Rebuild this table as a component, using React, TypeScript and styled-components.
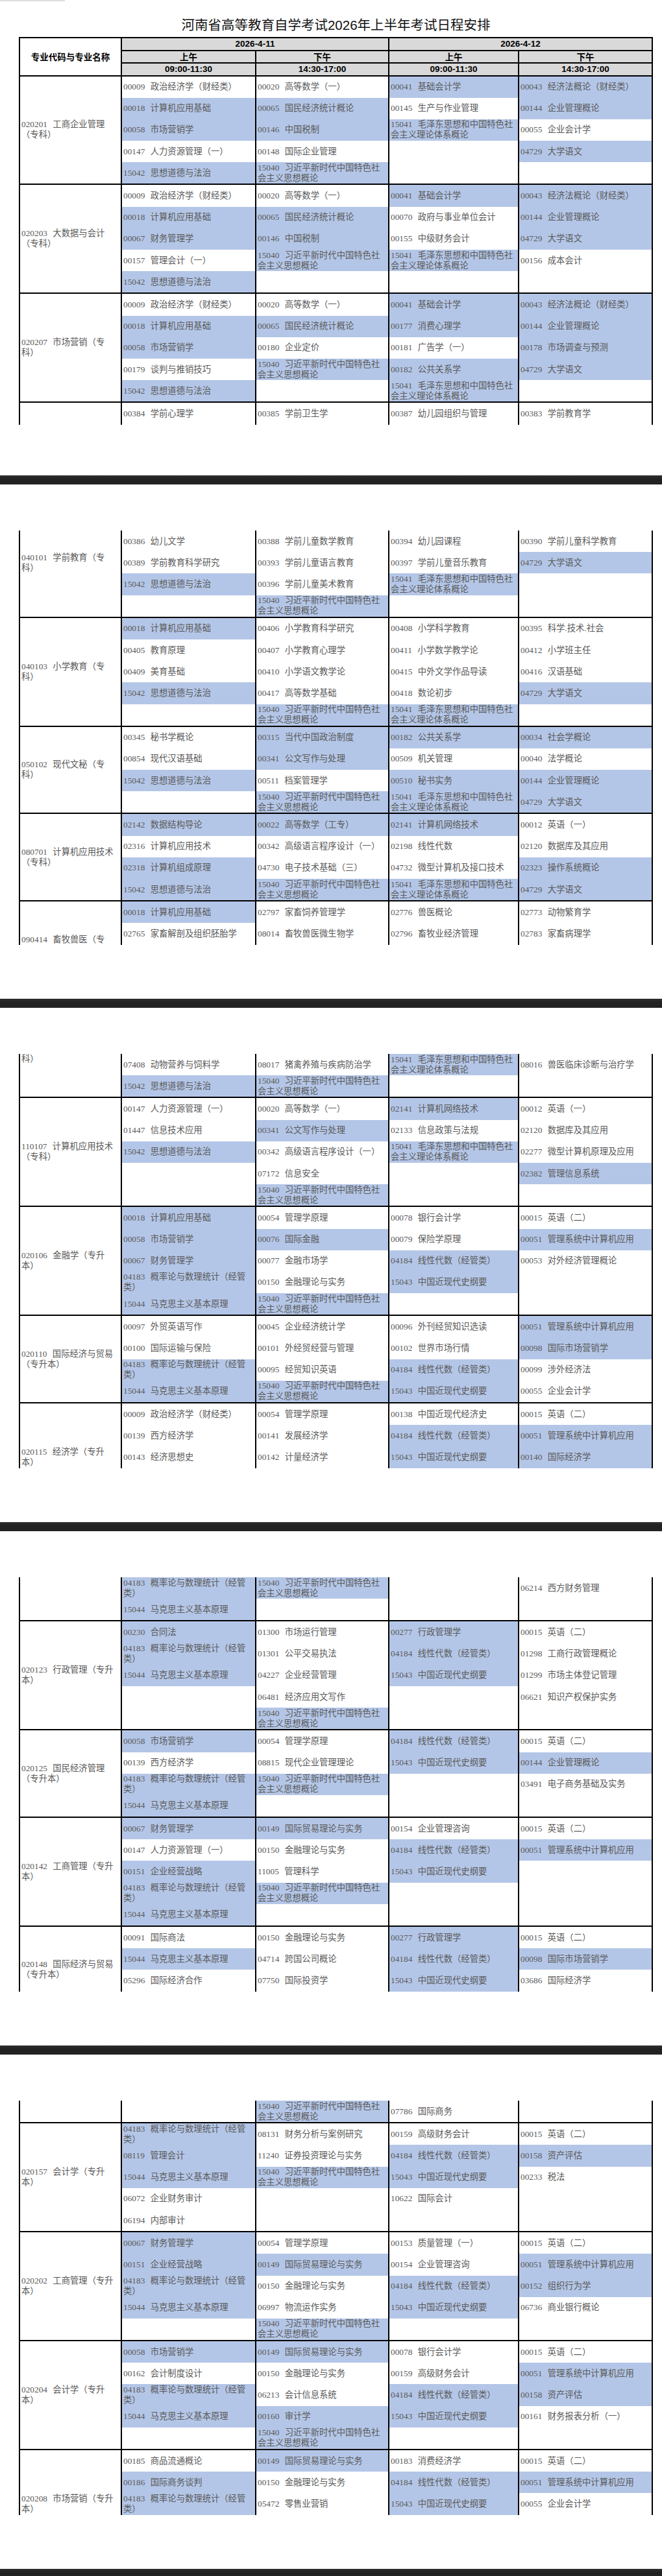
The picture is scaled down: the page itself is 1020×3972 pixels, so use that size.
import React from 'react'
import styled, { createGlobalStyle } from 'styled-components'

type Group = { label: string; rows: string[][]; span?: number }
type Segment = { group: Group; start: number; count: number }

const ROW = 33.2
const COLS = '155px 205px 203px 198px 204px'
const PAGE_ROWS = [16, 19, 19, 19, 19]

// shared courses, '*' marks a blue cell
const X = '*15040 习近平新时代中国特色社会主义思想概论'
const M = '*15041 毛泽东思想和中国特色社会主义理论体系概论'
const S = '*15042 思想道德与法治'
const J = '*15043 中国近现代史纲要'
const K = '*15044 马克思主义基本原理'
const Y = '*04729 大学语文'
const P = '*04183 概率论与数理统计（经管类）'
const L = '*04184 线性代数（经管类）'
const E2 = '00015 英语（二）'
const MS = '*00051 管理系统中计算机应用'
const ZZ = '00009 政治经济学（财经类）'

const groups: Group[] = [
  {
    label: '020201 工商企业管理（专科）',
    rows: [
      [ZZ, '00020 高等数学（一）', '*00041 基础会计学', '*00043 经济法概论（财经类）'],
      ['*00018 计算机应用基础', '*00065 国民经济统计概论', '00145 生产与作业管理', '*00144 企业管理概论'],
      ['*00058 市场营销学', '*00146 中国税制', M, '00055 企业会计学'],
      ['00147 人力资源管理（一）', '00148 国际企业管理', '', Y],
      [S, X, '', ''],
    ],
  },
  {
    label: '020203 大数据与会计（专科）',
    rows: [
      [ZZ, '00020 高等数学（一）', '*00041 基础会计学', '*00043 经济法概论（财经类）'],
      ['*00018 计算机应用基础', '*00065 国民经济统计概论', '00070 政府与事业单位会计', '*00144 企业管理概论'],
      ['*00067 财务管理学', '*00146 中国税制', '00155 中级财务会计', Y],
      ['00157 管理会计（一）', X, M, '00156 成本会计'],
      [S, '', '', ''],
    ],
  },
  {
    label: '020207 市场营销（专科）',
    rows: [
      [ZZ, '00020 高等数学（一）', '*00041 基础会计学', '*00043 经济法概论（财经类）'],
      ['*00018 计算机应用基础', '*00065 国民经济统计概论', '*00177 消费心理学', '*00144 企业管理概论'],
      ['*00058 市场营销学', '00180 企业定价', '00181 广告学（一）', '*00178 市场调查与预测'],
      ['00179 谈判与推销技巧', X, '*00182 公共关系学', Y],
      [S, '', M, ''],
    ],
  },
  {
    label: '040101 学前教育（专科）',
    rows: [
      ['00384 学前心理学', '00385 学前卫生学', '00387 幼儿园组织与管理', '00383 学前教育学'],
      ['00386 幼儿文学', '00388 学前儿童数学教育', '00394 幼儿园课程', '00390 学前儿童科学教育'],
      ['00389 学前教育科学研究', '00393 学前儿童语言教育', '00397 学前儿童音乐教育', Y],
      [S, '00396 学前儿童美术教育', M, ''],
      ['', X, '', ''],
    ],
  },
  {
    label: '040103 小学教育（专科）',
    rows: [
      ['*00018 计算机应用基础', '00406 小学教育科学研究', '00408 小学科学教育', '00395 科学.技术.社会'],
      ['00405 教育原理', '00407 小学教育心理学', '00411 小学数学教学论', '00412 小学班主任'],
      ['00409 美育基础', '00410 小学语文教学论', '00415 中外文学作品导读', '00416 汉语基础'],
      [S, '00417 高等数学基础', '00418 数论初步', Y],
      ['', X, M, ''],
    ],
  },
  {
    label: '050102 现代文秘（专科）',
    rows: [
      ['00345 秘书学概论', '*00315 当代中国政治制度', '*00182 公共关系学', '*00034 社会学概论'],
      ['00854 现代汉语基础', '*00341 公文写作与处理', '00509 机关管理', '00040 法学概论'],
      [S, '00511 档案管理学', '*00510 秘书实务', '*00144 企业管理概论'],
      ['', X, M, Y],
    ],
  },
  {
    label: '080701 计算机应用技术（专科）',
    rows: [
      ['*02142 数据结构导论', '*00022 高等数学（工专）', '*02141 计算机网络技术', '00012 英语（一）'],
      ['02316 计算机应用技术', '00342 高级语言程序设计（一）', '02198 线性代数', '02120 数据库及其应用'],
      ['*02318 计算机组成原理', '04730 电子技术基础（三）', '04732 微型计算机及接口技术', '*02323 操作系统概论'],
      [S, X, M, Y],
    ],
  },
  {
    label: '090414 畜牧兽医（专科）',
    rows: [
      ['*00018 计算机应用基础', '02797 家畜饲养管理学', '02776 兽医概论', '02773 动物繁育学'],
      ['02765 家畜解剖及组织胚胎学', '08014 畜牧兽医微生物学', '02796 畜牧业经济管理', '02783 家畜病理学'],
      ['07408 动物营养与饲料学', '08017 猪禽养殖与疾病防治学', M, '08016 兽医临床诊断与治疗学'],
      [S, X, '', ''],
    ],
  },
  {
    label: '110107 计算机应用技术（专科）',
    rows: [
      ['00147 人力资源管理（一）', '00020 高等数学（一）', '*02141 计算机网络技术', '00012 英语（一）'],
      ['01447 信息技术应用', '*00341 公文写作与处理', '02133 信息政策与法规', '02120 数据库及其应用'],
      [S, '00342 高级语言程序设计（一）', M, '02277 微型计算机原理及应用'],
      ['', '07172 信息安全', '', '*02382 管理信息系统'],
      ['', X, '', ''],
    ],
  },
  {
    label: '020106 金融学（专升本）',
    rows: [
      ['*00018 计算机应用基础', '00054 管理学原理', '00078 银行会计学', E2],
      ['*00058 市场营销学', '*00076 国际金融', '00079 保险学原理', MS],
      ['*00067 财务管理学', '00077 金融市场学', L, '00053 对外经济管理概论'],
      [P, '00150 金融理论与实务', J, ''],
      [K, X, '', ''],
    ],
  },
  {
    label: '020110 国际经济与贸易（专升本）',
    rows: [
      ['00097 外贸英语写作', '00045 企业经济统计学', '00096 外刊经贸知识选读', MS],
      ['00100 国际运输与保险', '00101 外经贸经营与管理', '00102 世界市场行情', '*00098 国际市场营销学'],
      [P, '00095 经贸知识英语', L, '00099 涉外经济法'],
      [K, X, J, '00055 企业会计学'],
    ],
  },
  {
    label: '020115 经济学（专升本）',
    rows: [
      [ZZ, '00054 管理学原理', '00138 中国近现代经济史', E2],
      ['00139 西方经济学', '00141 发展经济学', L, MS],
      ['00143 经济思想史', '00142 计量经济学', J, '*00140 国际经济学'],
      [P, X, '', '06214 西方财务管理'],
      [K, '', '', ''],
    ],
  },
  {
    label: '020123 行政管理（专升本）',
    rows: [
      ['*00230 合同法', '01300 市场运行管理', '*00277 行政管理学', E2],
      [P, '01301 公平交易执法', L, '01298 工商行政管理概论'],
      [K, '04227 企业经营管理', J, '01299 市场主体登记管理'],
      ['', '06481 经济应用文写作', '', '06621 知识产权保护实务'],
      ['', X, '', ''],
    ],
  },
  {
    label: '020125 国民经济管理（专升本）',
    rows: [
      ['*00058 市场营销学', '00054 管理学原理', L, E2],
      ['00139 西方经济学', '08815 现代企业管理理论', J, '*00144 企业管理概论'],
      [P, X, '', '03491 电子商务基础及实务'],
      [K, '', '', ''],
    ],
  },
  {
    label: '020142 工商管理（专升本）',
    rows: [
      ['*00067 财务管理学', '*00149 国际贸易理论与实务', '00154 企业管理咨询', E2],
      ['00147 人力资源管理（一）', '00150 金融理论与实务', L, MS],
      ['*00151 企业经营战略', '11005 管理科学', J, ''],
      [P, X, '', ''],
      [K, '', '', ''],
    ],
  },
  {
    label: '020148 国际经济与贸易（专升本）',
    rows: [
      ['00091 国际商法', '00150 金融理论与实务', '*00277 行政管理学', E2],
      [K, '04714 跨国公司概论', L, '*00098 国际市场营销学'],
      ['05296 国际经济合作', '07750 国际投资学', J, '03686 国际经济学'],
      ['', X, '07786 国际商务', ''],
    ],
  },
  {
    label: '020157 会计学（专升本）',
    rows: [
      [P, '08131 财务分析与案例研究', '00159 高级财务会计', E2],
      ['*08119 管理会计', '11240 证券投资理论与实务', L, '*00158 资产评估'],
      [K, X, J, '00233 税法'],
      ['06072 企业财务审计', '', '10622 国际会计', ''],
      ['06194 内部审计', '', '', ''],
    ],
  },
  {
    label: '020202 工商管理（专升本）',
    rows: [
      ['*00067 财务管理学', '00054 管理学原理', '00153 质量管理（一）', E2],
      ['*00151 企业经营战略', '*00149 国际贸易理论与实务', '00154 企业管理咨询', MS],
      [P, '00150 金融理论与实务', L, '*00152 组织行为学'],
      [K, '06997 物流运作实务', J, '06736 商业银行概论'],
      ['', X, '', ''],
    ],
  },
  {
    label: '020204 会计学（专升本）',
    rows: [
      ['*00058 市场营销学', '*00149 国际贸易理论与实务', '00078 银行会计学', E2],
      ['00162 会计制度设计', '00150 金融理论与实务', '00159 高级财务会计', MS],
      [P, '06213 会计信息系统', L, '*00158 资产评估'],
      [K, '*00160 审计学', J, '00161 财务报表分析（一）'],
      ['', X, '', ''],
    ],
  },
  {
    label: '020208 市场营销（专升本）',
    span: 5,
    rows: [
      ['00185 商品流通概论', '*00149 国际贸易理论与实务', '00183 消费经济学', E2],
      ['*00186 国际商务谈判', '00150 金融理论与实务', L, MS],
      [P, '05472 零售业营销', J, '00055 企业会计学'],
    ],
  },
]

function paginate(list: Group[]): Segment[][] {
  const pages: Segment[][] = []
  let gi = 0
  let ri = 0
  for (const size of PAGE_ROWS) {
    const segs: Segment[] = []
    let left = size
    while (left > 0 && gi < list.length) {
      const group = list[gi]
      const count = Math.min(left, group.rows.length - ri)
      segs.push({ group, start: ri, count })
      ri += count
      left -= count
      if (ri >= group.rows.length) {
        gi++
        ri = 0
      }
    }
    pages.push(segs)
  }
  return pages
}

const GlobalStyle = createGlobalStyle`
  html, body {
    margin: 0;
    padding: 0;
    background: #fff;
  }
  body {
    font-family: "Liberation Serif", "Noto Sans CJK SC", serif;
    text-spacing-trim: space-all;
  }
`

const FirstPage = styled.section`
  height: 733px;
  overflow: hidden;
`

const Page = styled.section`
  height: 793px;
  padding-top: 71px;
  box-sizing: border-box;
  overflow: hidden;
`

const PageBreak = styled.div`
  height: 14px;
  background: linear-gradient(#2e2e2e, #222 40%, #222);
`

const TopShade = styled.div`
  width: 100px;
  height: 2px;
  background: #dedede;
`

const Title = styled.h1`
  margin: 0 0 0 29px;
  width: 977px;
  height: 55px;
  padding-top: 15px;
  box-sizing: border-box;
  display: flex;
  align-items: center;
  justify-content: center;
  font: 400 20.5px "Liberation Sans", "Noto Sans CJK SC", sans-serif;
  color: #111;
`

const Sheet = styled.div`
  margin-left: 29px;
  width: 977px;
`

const Head = styled.div`
  display: grid;
  grid-template-columns: ${COLS};
  grid-template-rows: repeat(3, 17.5px);
  gap: 2px;
  background: #000;
  border: 2px solid #000;
`

const HeadCell = styled.div<{ $span?: number; $corner?: boolean }>`
  display: flex;
  align-items: center;
  justify-content: center;
  grid-column: span ${({ $span }) => $span ?? 1};
  grid-row: ${({ $corner }) => ($corner ? '1 / span 3' : 'auto')};
  background: ${({ $corner }) => ($corner ? '#fff' : '#d9d9d9')};
  font: 700 13.5px "Liberation Sans", "Noto Sans CJK SC", sans-serif;
  color: #000;
`

const Body = styled.div`
  border-left: 2px solid #000;
  border-right: 2px solid #000;
`

const Block = styled.div<{ $top: boolean }>`
  display: grid;
  grid-template-columns: ${COLS};
  grid-auto-rows: ${ROW}px;
  column-gap: 2px;
  background: #000;
  border-top: ${({ $top }) => ($top ? '2px solid #000' : 'none')};
`

const Cell = styled.div<{ $blue?: boolean }>`
  display: flex;
  align-items: center;
  padding: 0 4px 0 2px;
  box-sizing: border-box;
  background: ${({ $blue }) => ($blue ? '#b4c6e7' : '#fff')};
  color: #5a5a5a;
  font-size: 13.33px;
  line-height: 16px;
  overflow: hidden;
`

const LabelCell = styled(Cell)<{ $rows: number; $pt: number; $pb: number }>`
  grid-column: 1;
  grid-row: 1 / span ${({ $rows }) => $rows};
  padding-top: ${({ $pt }) => $pt}px;
  padding-bottom: ${({ $pb }) => $pb}px;
`

const Text = styled.span``

const Code = styled.span`
  margin-right: 5px;
`

function Entry({ value }: { value: string }) {
  const i = value.indexOf(' ')
  return (
    <Text>
      <Code>{value.slice(0, i)}</Code> {value.slice(i + 1)}
    </Text>
  )
}

function CourseCell({ value }: { value: string }) {
  const blue = value.startsWith('*')
  const text = blue ? value.slice(1) : value
  return <Cell $blue={blue}>{text && <Entry value={text} />}</Cell>
}

function GroupBlock({ seg, top }: { seg: Segment; top: boolean }) {
  const { group, start, count } = seg
  const total = group.span ?? group.rows.length
  // keep the label centred on the whole group, even when a page cuts it
  const centre = (total / 2 - start) * ROW
  const height = count * ROW
  const visible = centre + 16 > 0 && centre - 16 < height
  const off = centre - height / 2
  const pt = off > 0 ? Math.min(off * 2, height) : 0
  const pb = off < 0 ? Math.min(-off * 2, height) : 0

  return (
    <Block $top={top}>
      <LabelCell $rows={count} $pt={pt} $pb={pb}>
        {visible && <Entry value={group.label} />}
      </LabelCell>
      {group.rows.slice(start, start + count).map((row, r) =>
        row.map((v, c) => <CourseCell key={`${r}-${c}`} value={v} />)
      )}
    </Block>
  )
}

function PageBody({ segs }: { segs: Segment[] }) {
  return (
    <Body>
      {segs.map((seg, i) => (
        <GroupBlock key={i} seg={seg} top={i > 0 && seg.start === 0} />
      ))}
    </Body>
  )
}

export default function App() {
  const pages = paginate(groups)
  return (
    <>
      <GlobalStyle />
      <FirstPage>
        <TopShade />
        <Title>河南省高等教育自学考试2026年上半年考试日程安排</Title>
        <Sheet>
          <Head>
            <HeadCell $corner>专业代码与专业名称</HeadCell>
            <HeadCell $span={2}>2026-4-11</HeadCell>
            <HeadCell $span={2}>2026-4-12</HeadCell>
            <HeadCell>上午</HeadCell>
            <HeadCell>下午</HeadCell>
            <HeadCell>上午</HeadCell>
            <HeadCell>下午</HeadCell>
            <HeadCell>09:00-11:30</HeadCell>
            <HeadCell>14:30-17:00</HeadCell>
            <HeadCell>09:00-11:30</HeadCell>
            <HeadCell>14:30-17:00</HeadCell>
          </Head>
          <PageBody segs={pages[0]} />
        </Sheet>
      </FirstPage>
      {pages.slice(1).map((segs, i) => (
        <React.Fragment key={i}>
          <PageBreak />
          <Page>
            <Sheet>
              <PageBody segs={segs} />
            </Sheet>
          </Page>
        </React.Fragment>
      ))}
      <PageBreak />
    </>
  )
}
